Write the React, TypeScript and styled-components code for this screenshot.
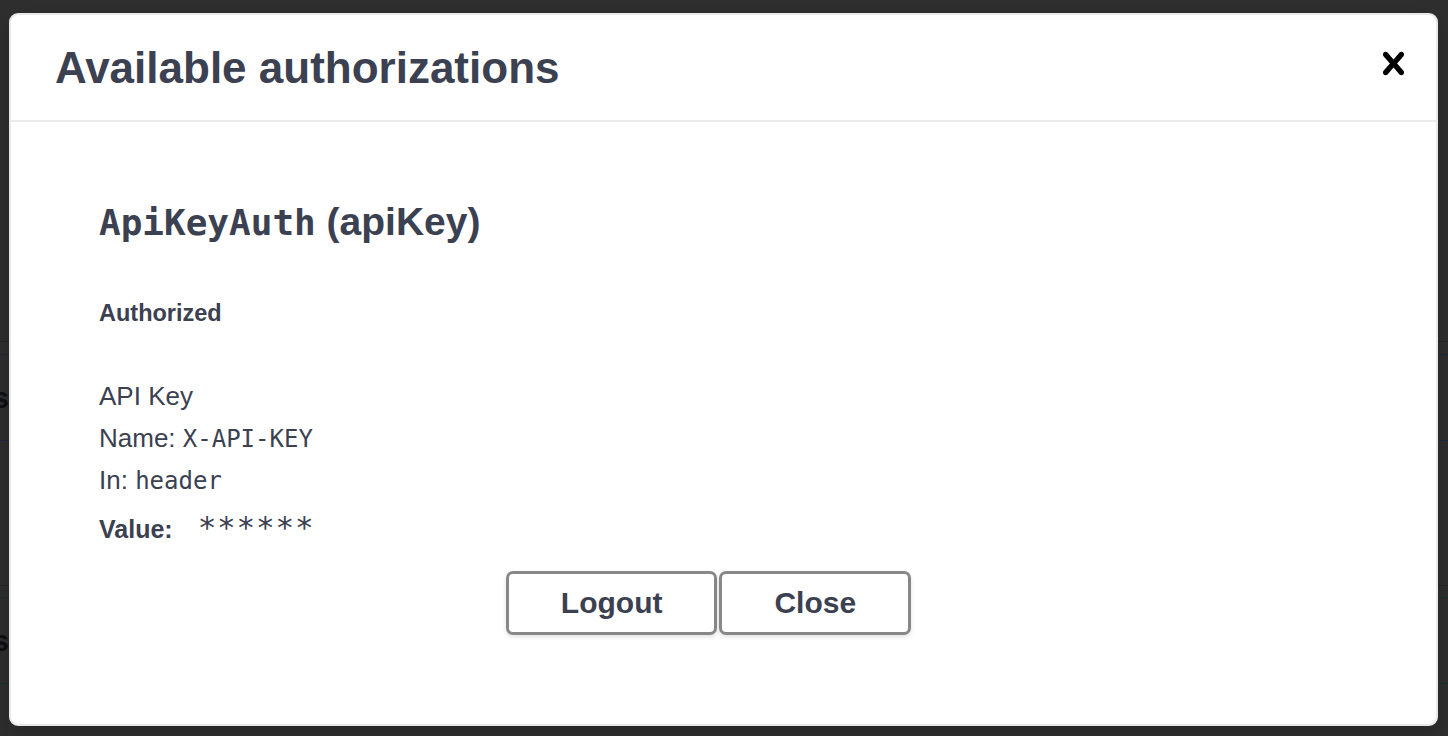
import React from "react";
import styled, { createGlobalStyle } from "styled-components";

const GlobalStyle = createGlobalStyle`
  html, body { margin: 0; padding: 0; }
  body {
    font-family: "Liberation Sans", Arial, sans-serif;
    background: #2f2f2f;
  }
  * { box-sizing: border-box; }
`;

const Page = styled.div`
  position: relative;
  width: 1448px;
  height: 736px;
  overflow: hidden;
  background: #2f2f2f;
`;

/* ---------- dimmed page behind the overlay ---------- */
const Backdrop = styled.div`
  display: flex;
  flex-direction: column;
  padding-top: 341px;
`;

const Rule = styled.div<{ $gap: number }>`
  height: 1px;
  margin-top: ${(p) => p.$gap}px;
  background: #262626;
`;

const OpBlock = styled.div<{ $tone: "blue" | "green"; $gap: number }>`
  height: 87px;
  margin-top: ${(p) => p.$gap}px;
  border-top: 1px solid ${(p) => (p.$tone === "blue" ? "#1d2b3c" : "#1b3326")};
  border-bottom: 1px solid ${(p) => (p.$tone === "blue" ? "#1d2b3c" : "#1b3326")};
  display: flex;
  align-items: center;
`;

const TagName = styled.div`
  width: 9px;
  overflow: hidden;
  display: flex;
  justify-content: flex-end;
  white-space: nowrap;
  font-size: 30px;
  font-weight: 700;
  color: #0e0f13;
`;

/* ---------- modal ---------- */
const Overlay = styled.div`
  position: absolute;
  inset: 0;
  display: flex;
  padding: 13px 10px 10px 9px;
`;

const Modal = styled.div`
  flex: 1;
  display: flex;
  flex-direction: column;
  background: #fff;
  border: 2px solid #e8e8e8;
  border-radius: 9px;
  box-shadow: 0 10px 30px rgba(0, 0, 0, 0.2);
  overflow: hidden;
`;

const Header = styled.div`
  height: 107px;
  flex-shrink: 0;
  display: flex;
  align-items: center;
  justify-content: space-between;
  padding: 0 20px 0 44px;
  border-bottom: 2px solid #ebebeb;
`;

const Title = styled.h3`
  margin: 0;
  font-size: 44px;
  font-weight: 700;
  color: #3b4151;
`;

const CloseIcon = styled.button`
  display: flex;
  padding: 0;
  margin-bottom: 9px;
  border: none;
  background: none;
  cursor: pointer;
  svg {
    width: 45px;
    height: 45px;
    fill: #000;
  }
`;

const Content = styled.div`
  padding: 76px 88px 0 88px;
  display: flex;
  flex-direction: column;
`;

const SchemeTitle = styled.h4`
  margin: 0;
  font-size: 39px;
  font-weight: 700;
  line-height: 48px;
  color: #3b4151;
`;

const Code = styled.code<{ $size: number; $bold?: boolean }>`
  font-family: "DejaVu Sans Mono", "Liberation Mono", monospace;
  font-size: ${(p) => p.$size}px;
  font-weight: ${(p) => (p.$bold ? 700 : 400)};
  line-height: 1;
  color: #3b4151;
`;

const Status = styled.h6`
  margin: 53px 0 0;
  font-size: 23.5px;
  font-weight: 700;
  line-height: 28px;
  color: #3b4151;
`;

const Details = styled.div`
  margin-top: 48px;
  display: flex;
  flex-direction: column;
`;

const Line = styled.div`
  font-size: 26px;
  line-height: 42px;
  color: #3b4151;
`;

const ValueLine = styled.div`
  display: flex;
  align-items: baseline;
  line-height: 56px;
  color: #3b4151;
`;

const ValueLabel = styled.label`
  font-size: 25px;
  font-weight: 700;
`;

const Masked = styled(Code)`
  margin-left: 25px;
  letter-spacing: 0.8px;
`;

const ButtonRow = styled.div`
  display: flex;
  justify-content: center;
  padding-top: 14px;
`;

const Btn = styled.button<{ $trail: number }>`
  height: 64px;
  padding: 0 52px;
  margin-right: ${(p) => p.$trail}px;
  border: 3px solid #888;
  border-radius: 7px;
  background: #fff;
  box-shadow: 0 2px 4px rgba(0, 0, 0, 0.12);
  font-family: "Liberation Sans", Arial, sans-serif;
  font-size: 30px;
  font-weight: 700;
  color: #3b4151;
  cursor: pointer;
`;

export default function App() {
  return (
    <Page>
      <GlobalStyle />
      <Backdrop>
        <Rule $gap={0} />
        <OpBlock $tone="blue" $gap={12}>
          <TagName>Items</TagName>
        </OpBlock>
        <Rule $gap={144} />
        <OpBlock $tone="green" $gap={11}>
          <TagName>Users</TagName>
        </OpBlock>
      </Backdrop>
      <Overlay>
        <Modal>
          <Header>
            <Title>Available authorizations</Title>
            <CloseIcon aria-label="Close">
              <svg viewBox="0 0 20 20">
                <path d="M14.348 14.849c-.469.469-1.229.469-1.697 0L10 11.819l-2.651 3.029c-.469.469-1.229.469-1.697 0-.469-.469-.469-1.229 0-1.697l2.758-3.15-2.759-3.152c-.469-.469-.469-1.228 0-1.697.469-.469 1.228-.469 1.697 0L10 8.183l2.651-3.031c.469-.469 1.228-.469 1.697 0 .469.469.469 1.229 0 1.697l-2.758 3.152 2.758 3.15c.469.469.469 1.229 0 1.698z" />
              </svg>
            </CloseIcon>
          </Header>
          <Content>
            <SchemeTitle>
              <Code $size={36} $bold>ApiKeyAuth</Code> (apiKey)
            </SchemeTitle>
            <Status>Authorized</Status>
            <Details>
              <Line>API Key</Line>
              <Line>
                Name: <Code $size={24}>X-API-KEY</Code>
              </Line>
              <Line>
                In: <Code $size={24}>header</Code>
              </Line>
              <ValueLine>
                <ValueLabel>Value:</ValueLabel>
                <Masked $size={31}>******</Masked>
              </ValueLine>
            </Details>
            <ButtonRow>
              <Btn $trail={2}>Logout</Btn>
              <Btn $trail={30}>Close</Btn>
            </ButtonRow>
          </Content>
        </Modal>
      </Overlay>
    </Page>
  );
}
